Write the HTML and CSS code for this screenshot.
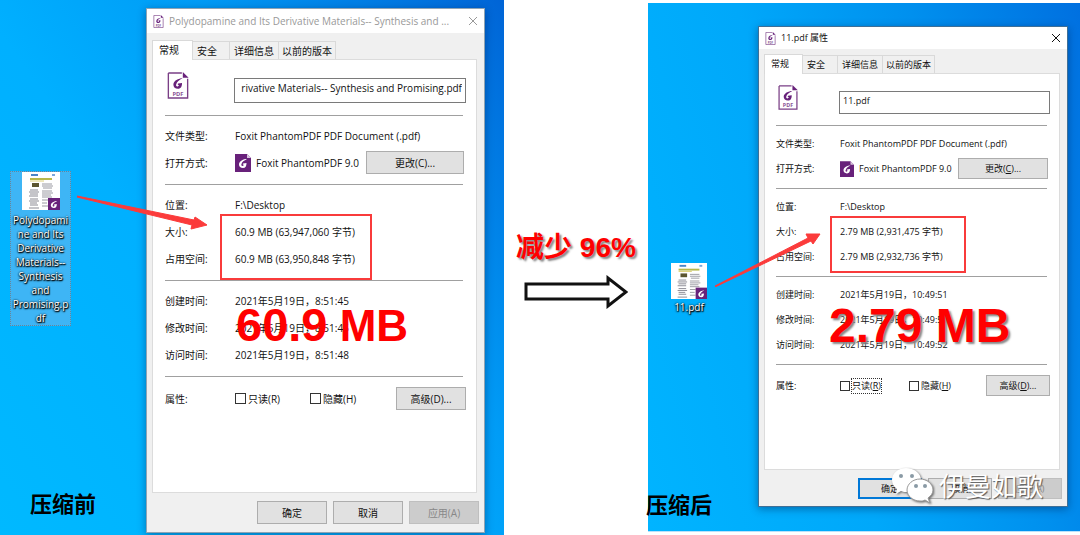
FILE: index.html
```html
<!DOCTYPE html>
<html lang="zh-CN">
<head>
    <meta charset="UTF-8">
    <meta name="viewport" content="width=device-width, initial-scale=1.0">
    <title>PDF 压缩前后对比</title>
    <link rel="stylesheet" href="styles.css">
</head>
<body>
    <!-- shared icons -->
    <svg class="defs" width="0" height="0">
        <symbol id="swirl" viewBox="0 0 20 20">
            <path d="M18 1C11 1 2 5 2 12c0 4 3 7 8 7 5 0 7-4 7-10l-7 1c-1 2 0 3 2 2-1 2-2 3-3 3-2 0-3-2-2-4C8 7 12 4 18 1z"/>
        </symbol>
        <symbol id="pdf-file" viewBox="0 0 22 28">
            <path d="M1 1h14M21 7v20H1V1" fill="#fff" stroke="#7a3f86" stroke-width="1.4"/>
            <path d="M16 0v6h6z" fill="#68217a"/>
            <use href="#swirl" x="5" y="6" width="12" height="12" fill="#68217a"/>
            <text x="11" y="25" text-anchor="middle" font-size="6" font-weight="bold" fill="#8a5595">PDF</text>
        </symbol>
        <symbol id="foxit" viewBox="0 0 16 18">
            <path d="M0 0h12l4 4v14H0z" fill="#68217a"/>
            <path d="M12 0v4h4z" fill="#d9c4de"/>
            <use href="#swirl" x="3" y="4" width="10" height="11" fill="#fff"/>
        </symbol>
        <symbol id="thumb" viewBox="0 0 38 38">
            <path d="M0 0h38v38H0z" fill="#fff"/>
            <path d="M9 3h7" stroke="#4a86c8" stroke-width="2"/>
            <path d="M30 3h3" stroke="#7aa7dc" stroke-width="2"/>
            <path d="M8 7h22" stroke="#b7b84a" stroke-width="2"/>
            <path d="M8 9h14" stroke="#ddd27a"/>
            <path d="M10 11h7v4h-7z" fill="#5c5630"/>
            <path d="M8 18h8M7 20h10M8 22h8M7 24h9M8 27h8M7 29h10M8 31h7M8 33h8M7 36h10" stroke="#8a8a93"/>
            <path d="M20 12h10M20 14h11M21 16h9M20 19h10M20 21h11M20 23h9M20 25h10M20 28h6M20 31h5M20 34h6" stroke="#9a9aa2"/>
            <path d="M26 26h12v12H26z" fill="#68217a"/>
            <use href="#swirl" x="28" y="28" width="8" height="9" fill="#fff"/>
        </symbol>
        <symbol id="close" viewBox="0 0 10 10">
            <path d="M1 1l8 8M9 1l-8 8" fill="none" stroke="currentColor"/>
        </symbol>
    </svg>

    <main class="compare">
        <section class="desktop before">
            <a class="file selected" href="#">
                <svg class="thumb"><use href="#thumb"/></svg>
                <span>Polydopami<br>ne and Its<br>Derivative<br>Materials--<br>Synthesis<br>and<br>Promising.p<br>df</span>
            </a>

            <div class="dialog">
                <header class="titlebar">
                    <svg class="title-icon"><use href="#pdf-file"/></svg>
                    <h2>Polydopamine and Its Derivative Materials-- Synthesis and ...</h2>
                    <button class="close" aria-label="关闭"><svg><use href="#close"/></svg></button>
                </header>
                <nav class="tabs">
                    <button class="tab active">常规</button>
                    <button class="tab tab-safe">安全</button>
                    <button class="tab">详细信息</button>
                    <button class="tab">以前的版本</button>
                </nav>
                <div class="panel">
                    <div class="name-row">
                        <svg class="file-icon"><use href="#pdf-file"/></svg>
                        <input class="name align-end" type="text" aria-label="文件名" value="rivative Materials-- Synthesis and Promising.pdf">
                    </div>
                    <div class="group">
                        <div class="row"><span class="label">文件类型:</span><span>Foxit PhantomPDF PDF Document (.pdf)</span></div>
                        <div class="row">
                            <span class="label">打开方式:</span>
                            <svg class="app-icon"><use href="#foxit"/></svg>
                            <span>Foxit PhantomPDF 9.0</span>
                            <button class="btn btn-change">更改(C)...</button>
                        </div>
                    </div>
                    <div class="group">
                        <div class="row"><span class="label">位置:</span><span>F:\Desktop</span></div>
                        <div class="row"><span class="label">大小:</span><span>60.9 MB (63,947,060 字节)</span></div>
                        <div class="row"><span class="label">占用空间:</span><span>60.9 MB (63,950,848 字节)</span></div>
                    </div>
                    <div class="group">
                        <div class="row"><span class="label">创建时间:</span><span>2021年5月19日，8:51:45</span></div>
                        <div class="row"><span class="label">修改时间:</span><span>2021年5月19日，8:51:45</span></div>
                        <div class="row"><span class="label">访问时间:</span><span>2021年5月19日，8:51:48</span></div>
                    </div>
                    <div class="group attributes">
                        <div class="row">
                            <span class="label">属性:</span>
                            <label class="check"><input type="checkbox"><span>只读(R)</span></label>
                            <label class="check"><input type="checkbox"><span>隐藏(H)</span></label>
                            <button class="btn btn-adv">高级(D)...</button>
                        </div>
                    </div>
                </div>
                <footer class="actions">
                    <button class="btn">确定</button>
                    <button class="btn">取消</button>
                    <button class="btn" disabled>应用(A)</button>
                </footer>
            </div>

            <div class="frame"></div>
            <svg class="pointer" viewBox="0 0 132 36"><path d="M0 2L0 3L115 31l-1 4 16-4-12-8-1 3z"/></svg>
            <p class="size"><span class="num">60.9</span> MB</p>
            <p class="caption">压缩前</p>
        </section>

        <section class="middle">
            <p class="saving">减少 96%</p>
            <svg class="arrow" viewBox="0 0 104 34"><path d="M2 9h82V3l18 14-18 14v-7H2z"/></svg>
        </section>

        <section class="desktop after">
            <a class="file" href="#">
                <svg class="thumb"><use href="#thumb"/></svg>
                <span>11.pdf</span>
            </a>

            <div class="dialog small">
                <header class="titlebar">
                    <svg class="title-icon"><use href="#pdf-file"/></svg>
                    <h2>11.pdf 属性</h2>
                    <button class="close" aria-label="关闭"><svg><use href="#close"/></svg></button>
                </header>
                <nav class="tabs">
                    <button class="tab active">常规</button>
                    <button class="tab tab-safe">安全</button>
                    <button class="tab">详细信息</button>
                    <button class="tab">以前的版本</button>
                </nav>
                <div class="panel">
                    <div class="name-row">
                        <svg class="file-icon"><use href="#pdf-file"/></svg>
                        <input class="name" type="text" aria-label="文件名" value="11.pdf">
                    </div>
                    <div class="group">
                        <div class="row"><span class="label">文件类型:</span><span>Foxit PhantomPDF PDF Document (.pdf)</span></div>
                        <div class="row">
                            <span class="label">打开方式:</span>
                            <svg class="app-icon"><use href="#foxit"/></svg>
                            <span>Foxit PhantomPDF 9.0</span>
                            <button class="btn btn-change">更改(<u>C</u>)...</button>
                        </div>
                    </div>
                    <div class="group">
                        <div class="row"><span class="label">位置:</span><span>F:\Desktop</span></div>
                        <div class="row"><span class="label">大小:</span><span>2.79 MB (2,931,475 字节)</span></div>
                        <div class="row"><span class="label">占用空间:</span><span>2.79 MB (2,932,736 字节)</span></div>
                    </div>
                    <div class="group">
                        <div class="row"><span class="label">创建时间:</span><span>2021年5月19日，10:49:51</span></div>
                        <div class="row"><span class="label">修改时间:</span><span>2021年5月19日，10:49:51</span></div>
                        <div class="row"><span class="label">访问时间:</span><span>2021年5月19日，10:49:52</span></div>
                    </div>
                    <div class="group attributes">
                        <div class="row">
                            <span class="label">属性:</span>
                            <label class="check focused"><input type="checkbox"><span>只读(<u>R</u>)</span></label>
                            <label class="check"><input type="checkbox"><span>隐藏(<u>H</u>)</span></label>
                            <button class="btn btn-adv">高级(<u>D</u>)...</button>
                        </div>
                    </div>
                </div>
                <footer class="actions">
                    <button class="btn primary">确定</button>
                    <button class="btn">取消</button>
                    <button class="btn" disabled>应用(A)</button>
                </footer>
            </div>

            <div class="frame"></div>
            <svg class="pointer" viewBox="0 0 106 54"><path d="M0 53L93 5l-2-4 14 0-7 10-2-3L0 54z"/></svg>
            <p class="size">2.79 MB</p>
            <p class="caption">压缩后</p>

            <div class="watermark">
                <svg class="wechat" viewBox="0 0 42 36">
                    <path d="M15 1C7 1 1 6 1 13c0 4 2 7 5 9l-1 5 5-3c2 1 4 1 6 1 8 0 14-5 14-12S23 1 15 1z"/>
                    <circle cx="10" cy="9" r="2"/>
                    <circle cx="21" cy="9" r="2"/>
                    <path class="front" d="M29 12c-7 0-13 5-13 11s6 11 13 11c2 0 3 0 5-1l5 3-2-5c3-2 5-5 5-8 0-6-6-11-13-11z"/>
                    <circle cx="25" cy="19" r="2"/>
                    <circle cx="34" cy="19" r="2"/>
                </svg>
                <span>伊曼如歌</span>
            </div>
        </section>
    </main>
</body>
</html>
```

FILE: styles.css
```css
* {
    box-sizing: border-box;
}
body {
    margin: 0;
    background: #fff;
    color: #111;
    font-family: "Open Sans", "Noto Sans CJK SC", sans-serif;
}
h2, p {
    margin: 0;
}
button, input {
    font: inherit;
    color: inherit;
}
svg {
    display: block;
    flex: none;
}
.defs {
    position: absolute;
}
.compare {
    display: grid;
    grid-template-columns: 7fr 2fr 6fr;
    min-height: 100vh;
}

/* desktops */
.desktop {
    position: relative;
}
.before {
    background: linear-gradient(55deg, #00b9ff 0%, #00b0ff 40%, #009cf6 65%, #0078e2 88%, #0064d6 100%);
}
.after {
    margin: 3px 0;
    border-bottom: 1px solid #b8e2fb;
    background: linear-gradient(75deg, #00b4ff 0%, #00a8fa 40%, #0090ee 70%, #0070e0 100%);
}
.file {
    position: absolute;
    display: flex;
    flex-direction: column;
    align-items: center;
    color: #fff;
    font-size: 10px;
    line-height: 14px;
    text-align: center;
    text-decoration: none;
    text-shadow: 1px 1px 1px #000, 0 0 2px #000, 0 1px 2px #000;
}
.before .file {
    left: 10px;
    top: 171px;
    width: 61px;
    gap: 3px;
}
.after .file {
    left: 18px;
    top: 260px;
    width: 46px;
    gap: 1px;
}
.selected {
    border: 1px dotted #6b8496;
    background: #3eb5f5;
}
.thumb {
    width: 38px;
    height: 38px;
}
.after .thumb {
    width: 36px;
    height: 36px;
}

/* properties dialog */
.dialog {
    --title: 24px;
    --pad: 12px;
    --label: 70px;
    --row: 27px;
    --btn: 70px;
    --btn-h: 23px;
    position: absolute;
    left: 146px;
    top: 8px;
    width: 339px;
    display: flex;
    flex-direction: column;
    border: 1px solid #8fa3b3;
    background: #f0f0f0;
    box-shadow: 0 2px 8px rgba(0,30,80,0.45);
    font-size: 10px;
    line-height: 14px;
    white-space: nowrap;
}
.small {
    --title: 22px;
    --pad: 11px;
    --label: 64px;
    --row: 25px;
    --btn: 64px;
    --btn-h: 21px;
    left: 110px;
    top: 23px;
    width: 310px;
    border-color: #3f6f96;
    font-size: 9px;
}
.titlebar {
    display: flex;
    align-items: center;
    height: var(--title);
    padding: 0 6px;
    gap: 5px;
    background: #fff;
}
.title-icon {
    width: 11px;
    height: 13px;
}
.titlebar h2 {
    flex: 1;
    font-size: 10px;
    font-weight: normal;
    color: #999;
}
.small h2 {
    font-size: 9px;
    color: #111;
}
.close {
    padding: 0;
    border: 0;
    background: none;
    color: #999;
}
.small .close {
    color: #111;
}
.close svg {
    width: 10px;
    height: 10px;
}
.tabs {
    display: flex;
    align-items: flex-end;
    height: 26px;
    padding: 0 5px;
}
.small .tabs {
    height: 24px;
}
.tab {
    height: 18px;
    padding: 0 4px;
    border: 1px solid #d9d9d9;
    border-left: 0;
    border-bottom: 0;
    background: #f0f0f0;
    line-height: 16px;
}
.tab:last-child {
    padding: 0 3px;
}
.tab-safe {
    padding-right: 12px;
}
.tab.active {
    position: relative;
    z-index: 1;
    height: 20px;
    margin-bottom: -1px;
    padding: 0 13px 2px 6px;
    border-left: 1px solid #d9d9d9;
    background: #fff;
}
.panel {
    height: 434px;
    margin: 0 7px 0 5px;
    padding: 0 calc(var(--pad) + 1px) 0 var(--pad);
    border: 1px solid #dcdcdc;
    background: #fff;
}
.small .panel {
    height: 397px;
}
.name-row {
    display: flex;
    align-items: flex-start;
    height: 55px;
    padding-top: 12px;
}
.small .name-row {
    height: 51px;
    padding-top: 11px;
}
.file-icon {
    width: 22px;
    height: 27px;
    margin: 0 45px 0 2px;
}
.small .file-icon {
    width: 20px;
    height: 25px;
    margin-right: 41px;
}
.name {
    flex: 1;
    min-width: 0;
    height: 25px;
    margin: 6px -3px 0 0;
    padding: 0 3px 5px;
    border: 1px solid #7a7a7a;
    background: #fff;
}
.small .name {
    height: 23px;
}
.align-end {
    text-align: right;
}
.group {
    padding: 6px 0 8px;
    border-top: 1px solid #a0a0a0;
}
.small .group {
    padding: 5px 0 7px;
}
.group.attributes {
    padding-top: 8px;
}
.row {
    display: flex;
    align-items: center;
    height: var(--row);
}
.label {
    flex: none;
    width: var(--label);
}
.app-icon {
    width: 16px;
    height: 18px;
    margin-right: 5px;
}
.small .app-icon {
    width: 14px;
    height: 16px;
}
.btn {
    width: var(--btn);
    height: var(--btn-h);
    padding: 0;
    border: 1px solid #adadad;
    background: #e1e1e1;
}
.btn:disabled {
    border-color: #bfbfbf;
    background: #ccc;
    color: #888;
}
.btn.primary {
    border: 2px solid #0078d7;
}
.btn-change {
    width: 98px;
    margin: 0 -1px 0 auto;
}
.small .btn-change {
    width: 90px;
}
.btn-adv {
    margin: 0 -3px 0 auto;
}
.check {
    display: flex;
    align-items: center;
    width: 75px;
    gap: 2px;
}
.small .check {
    width: 69px;
}
.check input {
    appearance: none;
    width: 11px;
    height: 11px;
    margin: 0;
    border: 1px solid #333;
    background: #fff;
}
.small .check input {
    width: 10px;
    height: 10px;
}
.focused span {
    outline: 1px dotted #333;
}
.actions {
    display: flex;
    justify-content: flex-end;
    padding: 8px 5px;
    gap: 6px;
}
.small .actions {
    padding: 8px 5px 7px;
}

/* red marks on top of the dialogs */
.frame {
    position: absolute;
    left: 220px;
    top: 214px;
    width: 152px;
    height: 66px;
    border: 2px solid #f93b3b;
}
.after .frame {
    left: 182px;
    top: 213px;
    width: 136px;
    height: 57px;
}
.pointer {
    position: absolute;
    left: 77px;
    top: 194px;
    width: 132px;
    height: 36px;
    fill: #fb3b3b;
    stroke: #fb3b3b;
    stroke-linejoin: round;
}
.after .pointer {
    left: 67px;
    top: 230px;
    width: 106px;
    height: 54px;
}
.size, .saving {
    color: #f00;
    font-family: "Liberation Sans", "Noto Sans CJK SC", sans-serif;
    font-weight: bold;
    white-space: nowrap;
}
.size {
    position: absolute;
    left: 236px;
    top: 300px;
    font-size: 44px;
    line-height: 50px;
}
.size .num {
    font-size: 47px;
}
.after .size {
    left: 181px;
    top: 298px;
    font-size: 48px;
    text-shadow: 2px 2px 2px #888;
}
.caption {
    position: absolute;
    left: 30px;
    top: 486px;
    color: #000;
    font-size: 22px;
    font-weight: bold;
    line-height: 32px;
    font-family: "Noto Sans CJK SC", sans-serif;
}
.after .caption {
    left: -2px;
    top: 484px;
}

/* middle column */
.middle {
    display: flex;
    flex-direction: column;
    align-items: center;
    padding-top: 230px;
    gap: 9px;
}
.saving {
    font-size: 28px;
    line-height: 36px;
    text-shadow: 2px 2px 2px #888;
}
.arrow {
    width: 104px;
    height: 34px;
    fill: #fff;
    stroke: #111;
    stroke-width: 3;
}

/* account watermark */
.watermark {
    position: absolute;
    left: 243px;
    top: 463px;
    display: flex;
    align-items: center;
    gap: 6px;
    color: #fff;
    font-family: "Noto Sans CJK SC", sans-serif;
    font-size: 26px;
    line-height: 38px;
    text-shadow: 1px 1px 1px #555;
}
.wechat {
    width: 42px;
    height: 36px;
    fill: #fff;
    filter: drop-shadow(1px 1px 1px #666);
}
.wechat circle {
    fill: #8a9aa5;
}
.front {
    stroke: #999;
}
```
